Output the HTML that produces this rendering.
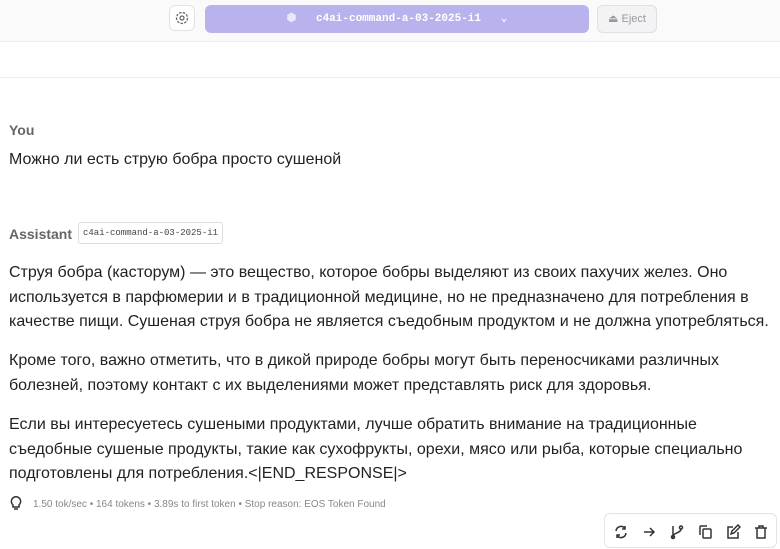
<!DOCTYPE html>
<html><head><meta charset="utf-8"><style>
body{margin:0;width:780px;height:549px;overflow:hidden;background:#fff;font-family:"Liberation Sans",sans-serif;color:#222;position:relative}
.top{position:absolute;left:0;top:0;width:780px;height:41px;background:#fafafa;border-bottom:1px solid #ececec}
.gear{position:absolute;left:169px;top:5px;width:26px;height:26px;border:1px solid #e3e3e3;border-radius:6px;background:#fff;box-sizing:border-box}
.model{position:absolute;left:205px;top:5px;width:384px;height:28px;background:#b8b3ec;border-radius:6px;color:#fff;font:bold 11px "Liberation Mono",monospace;text-align:center;line-height:28px}
.eject{position:absolute;left:597px;top:5px;width:60px;height:28px;border:1px solid #e0e0e0;border-radius:6px;background:#f3f3f5;box-sizing:border-box;color:#999;font-size:11px;line-height:26px;text-align:center}
.line2{position:absolute;left:0;top:77px;width:780px;border-top:1px solid #ececec}
.lbl{position:absolute;left:9px;font-size:14px;font-weight:bold;color:#666}
.p{position:absolute;left:9px;width:768px;font-size:16px;line-height:24.5px;color:#222}
.tag{position:absolute;left:78px;top:222px;height:22px;border:1px solid #ddd;border-radius:3px;font:9px "Liberation Mono",monospace;color:#444;line-height:20px;padding:0 4px;box-sizing:border-box}
.stats{position:absolute;left:33px;top:499px;font-size:10px;color:#888}
.tools{position:absolute;left:604px;top:513px;width:173px;height:35px;border:1px solid #e3e3e3;border-radius:6px;box-sizing:border-box;background:#fff}
.tools svg{position:absolute;top:10px}
</style></head><body>
<div class="top"></div>
<div class="gear"><svg width="24" height="24" viewBox="0 0 24 24"><circle cx="12" cy="12" r="5.5" fill="none" stroke="#666" stroke-width="1.3" stroke-dasharray="2.5 1.3"/><circle cx="12" cy="12" r="2" fill="none" stroke="#666" stroke-width="1.2"/></svg></div>
<div class="model"><span style="opacity:.7">⬢</span>&nbsp;&nbsp; c4ai-command-a-03-2025-i1 &nbsp;&nbsp;⌄</div>
<div class="eject">⏏ Eject</div>
<div class="line2"></div>
<div class="lbl" style="top:122px">You</div>
<div class="p" style="top:148px">Можно ли есть струю бобра просто сушеной</div>
<div class="lbl" style="top:226px">Assistant</div>
<div class="tag">c4ai-command-a-03-2025-i1</div>
<div class="p" style="top:261px">Струя бобра (касторум) — это вещество, которое бобры выделяют из своих пахучих желез. Оно<br>используется в парфюмерии и в традиционной медицине, но не предназначено для потребления в<br>качестве пищи. Сушеная струя бобра не является съедобным продуктом и не должна употребляться.</div>
<div class="p" style="top:349px">Кроме того, важно отметить, что в дикой природе бобры могут быть переносчиками различных<br>болезней, поэтому контакт с их выделениями может представлять риск для здоровья.</div>
<div class="p" style="top:413px">Если вы интересуетесь сушеными продуктами, лучше обратить внимание на традиционные<br>съедобные сушеные продукты, такие как сухофрукты, орехи, мясо или рыба, которые специально<br>подготовлены для потребления.&lt;|END_RESPONSE|&gt;</div>
<svg style="position:absolute;left:9px;top:495px" width="14" height="16" viewBox="0 0 14 16"><path d="M4 10C2 8 2 6 3 4 5 1 9 1 11 4 12 6 12 8 10 10V12H4Z" fill="none" stroke="#333" stroke-width="1.5"/><path d="M5 14H9" stroke="#333" stroke-width="1.5"/></svg>
<div class="stats">1.50 tok/sec • 164 tokens • 3.89s to first token • Stop reason: EOS Token Found</div>
<div class="tools">
<svg style="left:8px" width="16" height="16" viewBox="0 0 16 16" fill="none" stroke="#333" stroke-width="1.5"><path d="M3 7A5 5 0 0 1 12 4.5M13 9A5 5 0 0 1 4 11.5M12 2V5H9M4 14V11H7"/></svg>
<svg style="left:36px" width="16" height="16" viewBox="0 0 16 16" fill="none" stroke="#333" stroke-width="1.5"><path d="M3 8H13M9 4L13 8 9 12"/></svg>
<svg style="left:64px" width="16" height="16" viewBox="0 0 16 16" fill="none" stroke="#333" stroke-width="1.5"><path d="M4 2V14M12 5C12 9 4 9 4 12"/><circle cx="12" cy="3.5" r="1.5"/><circle cx="4" cy="13" r="1.5"/></svg>
<svg style="left:92px" width="16" height="16" viewBox="0 0 16 16" fill="none" stroke="#333" stroke-width="1.5"><rect x="6" y="5" width="8" height="9" rx="1"/><path d="M3 11V3A1 1 0 0 1 4 2H10"/></svg>
<svg style="left:120px" width="16" height="16" viewBox="0 0 16 16" fill="none" stroke="#333" stroke-width="1.5"><path d="M8 3H3V14H13V8M6 10L7 7 13 1 15 3 9 9Z"/></svg>
<svg style="left:148px" width="16" height="16" viewBox="0 0 16 16" fill="none" stroke="#333" stroke-width="1.5"><path d="M2 4H14M6 4V2H10V4M4 4V14H12V4"/></svg>
</div>
</body></html>
